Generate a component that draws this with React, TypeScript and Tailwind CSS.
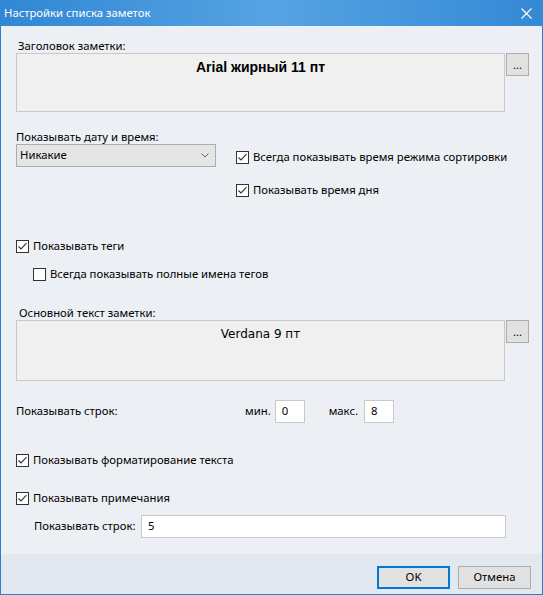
import React from "react";

const ui = { fontFamily: '"Noto Sans", "Open Sans", sans-serif' };

interface CheckProps {
  checked?: boolean;
  label: string;
  className?: string;
}

const Check: React.FC<CheckProps> = ({ checked, label, className = "" }) => (
  <div className={`flex h-[18px] items-center ${className}`}>
    <span className="flex h-[13px] w-[13px] shrink-0 items-center justify-center border border-[#333333] bg-white">
      {checked && (
        <svg width="11" height="11" viewBox="0 0 11 11">
          <path d="M1.5 5.5 L4 8 L9.5 2.2" fill="none" stroke="#333333" strokeWidth="1.1" />
        </svg>
      )}
    </span>
    <span className="ml-[4px] whitespace-nowrap text-[11.3px] leading-[14px] text-black">{label}</span>
  </div>
);

const DotsButton: React.FC = () => (
  <button className="ml-[1px] flex h-[23px] w-[23px] shrink-0 items-end justify-center border border-[#adadad] bg-[#e1e1e1] pb-[5px] text-[11px] leading-[11px] text-black">
    ...
  </button>
);

const Field: React.FC<{ value: string; className?: string }> = ({ value, className = "" }) => (
  <div className={`flex h-[23px] shrink-0 items-center border border-[#c9c9c9] bg-white pl-[6px] text-[11.3px] text-black ${className}`}>
    {value}
  </div>
);

export default function App() {
  return (
    <div className="flex h-[595px] w-[543px] flex-col border-x border-b border-[#2b7fd1] bg-[#eceff4]" style={ui}>
      {/* title bar */}
      <div className="-mx-px flex h-[26px] shrink-0 items-center justify-between bg-linear-to-r from-[#3087d4] via-[#55a3e2] to-[#3489d5] pl-[4px] pr-[11px] text-white">
        <span className="text-[11.3px] leading-[14px]">Настройки списка заметок</span>
        <svg width="11" height="11" viewBox="0 0 11 11">
          <path d="M0.5 0.5 L10.5 10.5 M10.5 0.5 L0.5 10.5" stroke="white" strokeWidth="1.1" />
        </svg>
      </div>

      {/* settings */}
      <div className="flex flex-1 flex-col whitespace-nowrap pl-[15px] pr-[13px] text-[11.3px] text-black">
        <div className="mt-[13px] h-[14px] pl-[2px] leading-[14px]">Заголовок заметки:</div>
        <div className="flex">
          <div className="flex h-[59px] w-[489px] justify-center border border-[#c8c8c8] bg-[#f0f0f0] pt-[5px]">
            <span className="text-[14px] font-bold leading-[16px]" style={{ fontFamily: '"Liberation Sans", Arial, sans-serif' }}>
              Arial жирный 11 пт
            </span>
          </div>
          <DotsButton />
        </div>

        <div className="mt-[18px] h-[14px] leading-[14px]">Показывать дату и время:</div>
        <div className="flex">
          <div className="flex h-[23px] w-[200px] items-center justify-between border border-[#adadad] bg-[#e5e5e5] pl-[3px] pr-[6px]">
            <span>Никакие</span>
            <svg width="8" height="5" viewBox="0 0 8 5">
              <path d="M0.5 0.5 L4 4 L7.5 0.5" fill="none" stroke="#606060" strokeWidth="1" />
            </svg>
          </div>
          <div className="ml-[20px] mt-[4px] flex flex-col gap-[15px]">
            <Check checked label="Всегда показывать время режима сортировки" />
            <Check checked label="Показывать время дня" />
          </div>
        </div>

        <Check checked label="Показывать теги" className="mt-[38px]" />
        <Check label="Всегда показывать полные имена тегов" className="ml-[17px] mt-[10px]" />

        <div className="mt-[23px] h-[14px] pl-[3px] leading-[14px]">Основной текст заметки:</div>
        <div className="flex">
          <div className="flex h-[61px] w-[489px] justify-center border border-[#c8c8c8] bg-[#f0f0f0] pt-[6px]">
            <span className="text-[12px] leading-[14px]" style={{ fontFamily: '"DejaVu Sans", Verdana, sans-serif' }}>
              Verdana 9 пт
            </span>
          </div>
          <DotsButton />
        </div>

        <div className="mt-[19px] flex h-[23px] items-center">
          <span className="w-[229px]">Показывать строк:</span>
          <span>мин.</span>
          <Field value="0" className="ml-[4px] w-[30px]" />
          <span className="ml-[24px]">макс.</span>
          <Field value="8" className="ml-[6px] w-[30px]" />
        </div>

        <Check checked label="Показывать форматирование текста" className="mt-[28px]" />
        <Check checked label="Показывать примечания" className="mt-[20px]" />

        <div className="mt-[8px] flex h-[23px] items-center pl-[18px]">
          <span className="w-[107px]">Показывать строк:</span>
          <Field value="5" className="w-[365px]" />
        </div>
      </div>

      {/* dialog buttons */}
      <div className="flex h-[40px] shrink-0 items-start justify-end gap-[8px] bg-[#e2e8f0] pr-[11px] pt-[12px] text-[11.3px] text-black">
        <button className="h-[23px] w-[73px] border-2 border-[#0078d7] bg-[#e1e1e1]">OK</button>
        <button className="h-[23px] w-[73px] border border-[#adadad] bg-[#e1e1e1]">Отмена</button>
      </div>
    </div>
  );
}
